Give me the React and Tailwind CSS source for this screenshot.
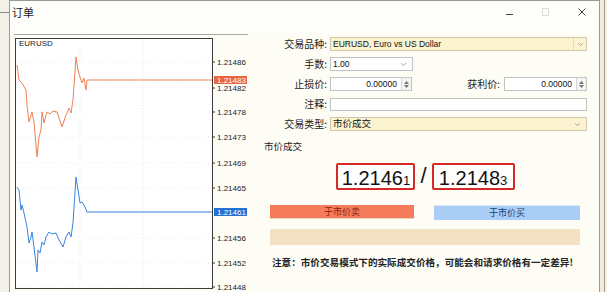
import { ChevronDown } from 'lucide-react';

const cn = '"Noto Sans CJK SC", sans-serif';
const lat = '"Liberation Sans", Arial, sans-serif';

const red = [
  [17, 65], [19, 80], [22, 83], [26, 90], [27, 105], [29, 122], [32, 112], [34, 122], [37, 157],
  [39, 137], [41, 130], [42, 112], [44, 123], [46, 115], [47, 112], [50, 114], [53, 111], [57, 112],
  [62, 127], [66, 115], [69, 108], [71, 113], [73, 100], [76, 57], [78, 70], [80, 77], [82, 83],
  [84, 78], [86, 90], [87, 80], [212, 80],
];

const blue = [
  [17, 187], [19, 190], [21, 210], [22, 205], [24, 213], [27, 227], [29, 243], [31, 237], [32, 232],
  [34, 247], [37, 272], [38, 250], [40, 253], [42, 242], [44, 245], [46, 237], [49, 232], [52, 234],
  [56, 233], [59, 240], [63, 247], [66, 237], [69, 232], [71, 237], [73, 223], [76, 177], [78, 190],
  [80, 203], [82, 202], [85, 207], [87, 212], [212, 212],
];

const ticks = [
  ['1.21486', 62], ['1.21482', 88], ['1.21478', 112], ['1.21473', 137], ['1.21469', 163],
  ['1.21465', 188], ['1.21456', 238], ['1.21452', 263], ['1.21448', 287],
];

function Chart() {
  return (
    <svg width="236" height="258" viewBox="14 34 236 258" className="ml-[4px] shrink-0">
      <line x1="14" y1="34.5" x2="248" y2="34.5" stroke="#a8a8a0" />
      <rect x="15.5" y="38.5" width="197" height="250" fill="#ffffff" stroke="#3a3a3a" />
      {[80, 143].map(x => (
        <line key={x} x1={x} y1="39" x2={x} y2="288" stroke="#e6e6e6" strokeDasharray="1 2" />
      ))}
      {ticks.map(([, y]) => (
        <line key={y} x1="16" y1={y} x2="212" y2={y} stroke="#eeeeee" strokeDasharray="1 2" />
      ))}
      {ticks.map(([, y]) => (
        <line key={'t' + y} x1="212" y1={y} x2="215" y2={y} stroke="#3a3a3a" />
      ))}
      <text x="19" y="46" fontSize="8" fontFamily={lat} fill="#222">EURUSD</text>
      <polyline points={red.map(p => p.join(',')).join(' ')} fill="none" stroke="#ef8056" strokeWidth="1" />
      <polyline points={blue.map(p => p.join(',')).join(' ')} fill="none" stroke="#3a84dc" strokeWidth="1" />
      {ticks.map(([t, y]) => (
        <text key={t} x="217" y={y + 3} fontSize="8" fontFamily={lat} fill="#222">{t}</text>
      ))}
      <rect x="214" y="76" width="33" height="8" fill="#e9653f" />
      <text x="217" y="83" fontSize="8" fontFamily={lat} fill="#fff">1.21483</text>
      <rect x="214" y="208" width="33" height="8" fill="#2371d2" />
      <text x="217" y="215" fontSize="8" fontFamily={lat} fill="#fff">1.21461</text>
    </svg>
  );
}

function Spinner() {
  return (
    <div className="w-[10px] flex flex-col items-center justify-center gap-[1px] border-l border-[#d6d6d6] bg-[#f4f4f2]">
      <svg width="5" height="3" viewBox="0 0 5 3"><path d="M0 3 L2.5 0 L5 3 Z" fill="#777" /></svg>
      <svg width="5" height="3" viewBox="0 0 5 3"><path d="M0 0 L2.5 3 L5 0 Z" fill="#777" /></svg>
    </div>
  );
}

function Label({ children }) {
  return (
    <div className="w-[80px] text-right pr-[3px] text-[10px] leading-none text-[#222]" style={{ fontFamily: cn }}>
      {children}
    </div>
  );
}

function Price({ main, last, width }) {
  return (
    <div className={`h-[27px] ${width} flex items-baseline justify-center pt-[3px] border-2 border-[#d42a25] rounded-[2px] bg-white`} style={{ fontFamily: lat }}>
      <span className="text-[20px] leading-[20px] text-[#111]">{main}</span>
      <span className="text-[13px] leading-[20px] text-[#111]">{last}</span>
    </div>
  );
}

export default function App() {
  return (
    <div className="w-[607px] h-[292px] flex bg-[#f3f1e8] overflow-hidden">
      <div className="w-[9px] shrink-0">
        <div className="mt-[12px] border-t border-[#8c8c86]" />
      </div>

      <div className="w-[591px] shrink-0 flex flex-col border-l border-t border-r border-[#9a9a94] bg-[#fdfcf5]">
        {/* title bar */}
        <div className="h-[33px] flex items-start pt-[6px] pl-[2px] bg-[#fdfdfa]">
          <span className="text-[11px] leading-none text-[#222]" style={{ fontFamily: cn }}>订单</span>
          <div className="ml-auto flex items-center gap-[29px] pr-[13px] pt-[1px]">
            <div className="w-[7px] h-[1px] bg-[#444] mt-[4px]" />
            <div className="w-[7px] h-[8px] border border-[#dcdcd6]" />
            <svg width="8" height="8" viewBox="0 0 8 8"><path d="M0.5 0.5 L7.5 7.5 M7.5 0.5 L0.5 7.5" stroke="#444" strokeWidth="1" /></svg>
          </div>
        </div>

        <div className="flex flex-1">
          <Chart />

          {/* form */}
          <div className="flex-1 flex flex-col pt-[3px] pr-[12px]">
            <div className="flex items-center h-[14px]">
              <Label>交易品种:</Label>
              <div className="flex-1 h-[14px] flex border border-[#cfc7a6] bg-[#fcf3d0]">
                <span className="flex-1 pl-[2px] text-[8.5px] leading-[12px] text-[#111]" style={{ fontFamily: lat }}>EURUSD, Euro vs US Dollar</span>
                <div className="w-[13px] flex items-center justify-center border-l border-[#e2dcc4]"><ChevronDown size={9} color="#8a8a8a" /></div>
              </div>
            </div>

            <div className="flex items-center h-[14px] mt-[6px]">
              <Label>手数:</Label>
              <div className="w-[83px] h-[14px] flex items-center border border-[#c2c2c2] bg-white">
                <span className="flex-1 pl-[2px] text-[8.5px] leading-none text-[#111]" style={{ fontFamily: lat }}>1.00</span>
                <ChevronDown size={9} color="#8a8a8a" className="mr-[4px]" />
              </div>
            </div>

            <div className="flex items-center h-[14px] mt-[6px]">
              <Label>止损价:</Label>
              <div className="w-[82px] h-[14px] flex border border-[#c2c2c2] bg-white">
                <span className="flex-1 text-right pr-[4px] text-[8.5px] leading-[12px] text-[#111]" style={{ fontFamily: lat }}>0.00000</span>
                <Spinner />
              </div>
              <div className="flex-1 text-right pr-[4px] text-[10px] leading-none text-[#222]" style={{ fontFamily: cn }}>获利价:</div>
              <div className="w-[83px] h-[14px] flex border border-[#c2c2c2] bg-white">
                <span className="flex-1 text-right pr-[4px] text-[8.5px] leading-[12px] text-[#111]" style={{ fontFamily: lat }}>0.00000</span>
                <Spinner />
              </div>
            </div>

            <div className="flex items-center h-[14px] mt-[6px]">
              <Label>注释:</Label>
              <div className="flex-1 h-[13px] border border-[#c2c2c2] bg-white" />
            </div>

            <div className="flex items-center h-[14px] mt-[6px]">
              <Label>交易类型:</Label>
              <div className="flex-1 h-[14px] flex items-center border border-[#cfc7a6] bg-[#fcf3d0]">
                <span className="flex-1 pl-[2px] text-[9.5px] leading-none text-[#111]" style={{ fontFamily: cn }}>市价成交</span>
                <ChevronDown size={9} color="#8a8a8a" className="mr-[4px]" />
              </div>
            </div>

            <div className="mt-[11px] pl-[14px] text-[9.5px] leading-none text-[#222]" style={{ fontFamily: cn }}>市价成交</div>

            {/* prices */}
            <div className="flex items-center justify-center gap-[5px] mt-[11px] pl-[14px]">
              <Price main="1.2146" last="1" width="w-[79px]" />
              <span className="text-[22px] leading-none text-[#111]" style={{ fontFamily: lat }}>/</span>
              <Price main="1.2148" last="3" width="w-[83px]" />
            </div>

            {/* buttons */}
            <div className="flex mt-[15px] pl-[20px] pr-[7px] gap-[20px]">
              <div className="w-[144px] h-[14px] flex items-center justify-center bg-[#f47c5a] border-b border-[#e8d6c0] text-[9px] leading-none text-[#8e1d0c]" style={{ fontFamily: cn }}>于市价卖</div>
              <div className="flex-1 h-[15px] flex items-center justify-center bg-[#a9cdf5] border-t border-[#dbe8f6] text-[9px] leading-none text-[#173c78]" style={{ fontFamily: cn }}>于市价买</div>
            </div>

            <div className="mt-[9px] ml-[20px] mr-[7px] h-[16px] bg-[#f2e1c3]" />

            <div className="mt-[13px] pl-[22px] text-[9.6px] leading-none font-bold text-[#222] whitespace-nowrap" style={{ fontFamily: cn }}>
              注意：市价交易模式下的实际成交价格，可能会和请求价格有一定差异!
            </div>
          </div>
        </div>
      </div>

      <div className="flex-1 flex">
        <div className="w-[4px] bg-[#f4ecd9]" />
        <div className="w-[1px] bg-[#a09c90]" />
      </div>
    </div>
  );
}
